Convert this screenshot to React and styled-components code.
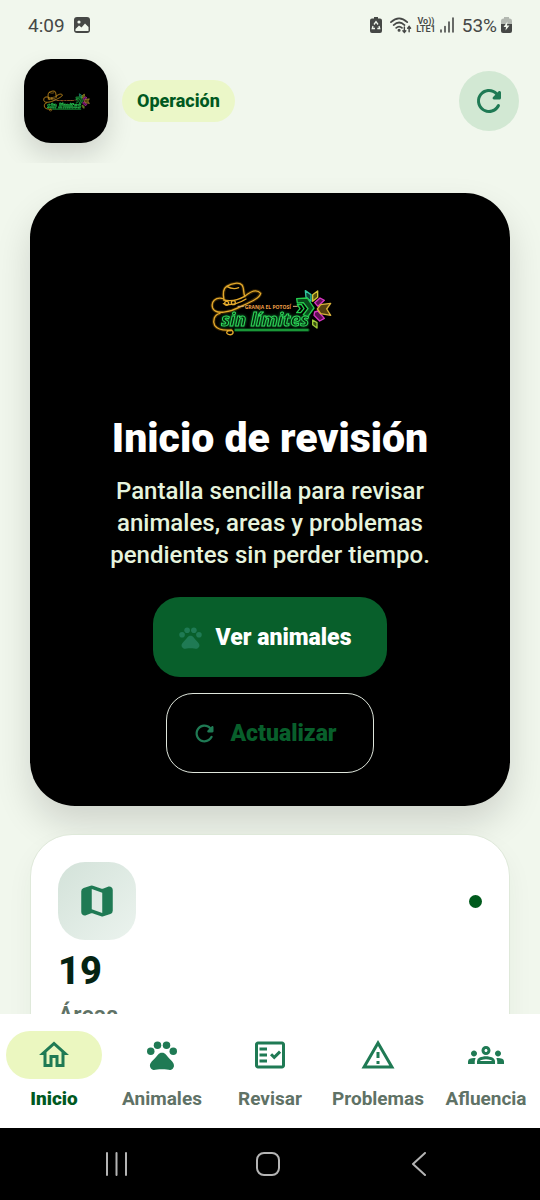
import React from 'react'
import styled, { createGlobalStyle } from 'styled-components'
import {
  MdPets,
  MdOutlineHome,
  MdOutlineFactCheck,
  MdOutlineWarningAmber,
  MdOutlineGroups,
} from 'react-icons/md'

const tabs = [
  { label: 'Inicio', Icon: MdOutlineHome, active: true },
  { label: 'Animales', Icon: MdPets },
  { label: 'Revisar', Icon: MdOutlineFactCheck },
  { label: 'Problemas', Icon: MdOutlineWarningAmber },
  { label: 'Afluencia', Icon: MdOutlineGroups },
]

const RefreshIcon = ({ size }) => (
  <svg width={size} height={size} viewBox="0 0 24 24" fill="currentColor" aria-hidden="true">
    <path d="M17.65 6.35c-1.63-1.63-3.94-2.57-6.48-2.31-3.67.37-6.69 3.35-7.1 7.02C3.52 15.91 7.27 20 12 20c3.19 0 5.93-1.87 7.21-4.56.32-.67-.16-1.44-.9-1.44-.37 0-.72.2-.88.53-1.13 2.43-3.84 3.97-6.8 3.31-2.22-.49-4.01-2.3-4.48-4.52C5.31 9.44 8.26 6 12 6c1.66 0 3.14.69 4.22 1.78l-1.51 1.51c-.63.63-.19 1.71.7 1.71H19c.55 0 1-.45 1-1V6.41c0-.89-1.08-1.34-1.71-.71l-.64.65z" />
  </svg>
)

const MapIcon = () => (
  <svg width="42" height="42" viewBox="0 0 24 24" fill="currentColor" aria-hidden="true">
    <path
      fillRule="evenodd"
      d="M14.65 4.98l-5-1.75a2 2 0 0 0-1.31 0L4.36 4.57A2 2 0 0 0 3 6.46v11.85c0 1.41 1.41 2.37 2.72 1.84l2.93-1.14c.22-.09.47-.09.69-.01l5 1.75c.43.15.89.15 1.31 0l3.98-1.34A2 2 0 0 0 21 17.52V5.67c0-1.41-1.41-2.37-2.72-1.84l-2.93 1.14c-.22.08-.47.09-.7.01zM15 18.89l-6-2.11V5.11l6 2.11v11.67z"
    />
  </svg>
)

const Logo = ({ width }) => (
  <svg width={width} viewBox="0 0 420 240" role="img" aria-label="Granja El Potosí sin límites">
    <g fill="none" strokeLinecap="round" strokeLinejoin="round">
      <g stroke="#5c3d05" strokeWidth="10" opacity="0.6">
        <path d="M72 90C68 70 72 54 80 49C96 39 118 36 126 45C132 52 130 68 134 79" />
        <path d="M70 86C46 80 32 96 38 114C46 136 92 126 122 110C152 96 180 84 182 70C170 56 152 64 134 79" />
        <path d="M60 130C42 134 38 152 44 166C52 178 72 182 94 180" />
      </g>
      <g stroke="#e3a92c" strokeWidth="4">
        <path d="M72 90C68 70 72 54 80 49C92 56 104 58 116 53M80 49C96 39 118 36 126 45C132 52 130 68 134 79" />
        <path d="M70 86C46 80 32 96 38 114C46 136 92 126 122 110C152 96 180 84 182 70C170 56 152 64 134 79" />
        <path d="M72 90C92 95 116 89 134 79M70 101C92 109 120 99 138 87" />
        <path d="M74 100a6 6 0 1 0 12 0a6 6 0 1 0-12 0M94 98a6 6 0 1 0 12 0a6 6 0 1 0-12 0" />
        <path d="M60 130C42 134 38 152 44 166C52 178 72 182 94 180C104 186 98 196 88 194C76 192 78 180 92 182" />
      </g>
      <path stroke="#0c6b26" strokeWidth="10" opacity="0.7" d="M106 180H324" />
      <path stroke="#2ce457" strokeWidth="3" d="M106 180H324" />
      <path stroke="#d8b27e" strokeWidth="3" d="M114 109H130M280 109H292" />
      <g strokeWidth="4">
        <path fill="#0d4437" stroke="#31c5a0" d="M316 62L333 74V94L318 82Z" />
        <path fill="#55500d" stroke="#d6c536" d="M338 74L353 63V82L338 94Z" />
        <path fill="#0a4a1c" stroke="#24cf4e" d="M290 86L322 84L342 114L322 142L310 134L324 116L310 98L292 99Z" />
        <path stroke="#24cf4e" d="M292 104L304 103L312 116L302 128H290L300 116Z" />
        <path fill="#5e0f54" stroke="#d936c4" d="M344 98L360 84L373 91L354 109ZM344 126L354 123L373 145L359 153L342 136Z" />
        <path fill="#54400d" stroke="#d8b13a" d="M362 104L392 100L380 117L392 136L362 131L352 117Z" />
        <path fill="#39500f" stroke="#9fc93a" d="M338 150L351 158V174L338 164Z" />
      </g>
    </g>
    <LogoSmall x="134" y="116">GRANJA EL POTOSÍ</LogoSmall>
    <LogoGlow x="64" y="169">sin límites</LogoGlow>
  </svg>
)

const App = () => {
  return (
    <>
      <GlobalStyle />
      <Screen>
        <StatusBar>
          <StatusGroup>
            <span>4:09</span>
            <svg width="16" height="16" viewBox="0 0 16 16" aria-hidden="true">
              <rect width="16" height="16" rx="3" fill="#464846" />
              <circle cx="5" cy="5" r="1.6" fill="#f1f7ed" />
              <path d="M1.5 12L5 8.5L7.5 10.5L11 6.5L14.5 10V14H1.5Z" fill="#f1f7ed" />
            </svg>
          </StatusGroup>
          <StatusIcons>
            <BatterySaver width="12" height="16" viewBox="0 0 12 16" aria-hidden="true">
              <path d="M4 0H8V1.5H10A2 2 0 0 1 12 3.5V14A2 2 0 0 1 10 16H2A2 2 0 0 1 0 14V3.5A2 2 0 0 1 2 1.5H4Z" fill="#464846" />
              <path d="M4 7.5L6 4.700L8 7.5M9 9L9.7 11.5H7.3M5 11.5H2.300L3 9" fill="none" stroke="#f1f7ed" strokeWidth="1.3" />
            </BatterySaver>
            <svg width="22" height="17" viewBox="0 0 23 17" fill="none" stroke="#464846" strokeWidth="1.8" strokeLinecap="round" aria-hidden="true">
              <path d="M1 5Q9.5 -3 18 5M3.8 8Q9.5 2.7 15.2 8M6.5 11Q9.5 8.2 12.5 11" />
              <circle cx="9.5" cy="13.5" r="0.7" fill="#464846" />
              <path strokeWidth="1.5" d="M15 10V15.5M13.5 14L15 15.8L16.5 14M20 15V9.7M18.5 11.3L20 9.5L21.5 11.3" />
            </svg>
            <Volte>
              <span>Vo))</span>
              <span>LTE1</span>
            </Volte>
            <svg width="14" height="16" viewBox="0 0 14 16" stroke="#464846" strokeWidth="1.6" strokeLinecap="round" aria-hidden="true">
              <path d="M1 13V15M5 9.5V15M9 5V15M13 1V15" />
            </svg>
            <Percent>53%</Percent>
            <svg width="11" height="16" viewBox="0 0 11 16" aria-hidden="true">
              <path d="M3 0H8V1.5A2.5 2.5 0 0 1 11 4V8H0V4A2.5 2.5 0 0 1 3 1.5Z" fill="#b3b8b1" />
              <path d="M0 7H11V14A2 2 0 0 1 9 16H2A2 2 0 0 1 0 14Z" fill="#464846" />
              <path d="M6.5 4.5L2.5 10H5L4.5 13.5L8.5 8.5H6Z" fill="#f1f7ed" />
            </svg>
          </StatusIcons>
        </StatusBar>

        <Header>
          <Brand>
            <Logo width={54} />
          </Brand>
          <Chip>Operación</Chip>
          <RoundButton aria-label="Actualizar">
            <RefreshIcon size={36} />
          </RoundButton>
        </Header>

        <Content>
          <Hero>
            <HeroLogo>
              <Logo width={140} />
            </HeroLogo>
            <Title>Inicio de revisión</Title>
            <Description>
              Pantalla sencilla para revisar animales, areas y problemas pendientes sin perder tiempo.
            </Description>
            <Actions>
              <PrimaryButton>
                <MdPets size={27} />
                <span>Ver animales</span>
              </PrimaryButton>
              <OutlineButton>
                <RefreshIcon size={27} />
                <span>Actualizar</span>
              </OutlineButton>
            </Actions>
          </Hero>
          <StatCard>
            <StatTop>
              <StatIcon>
                <MapIcon />
              </StatIcon>
              <Dot />
            </StatTop>
            <StatValue>19</StatValue>
            <StatLabel>Áreas</StatLabel>
          </StatCard>
        </Content>

        <TabBar>
          {tabs.map(({ label, Icon, active }) => (
            <Tab key={label} href="#" $active={active} aria-current={active ? 'page' : undefined}>
              <TabIcon $active={active}>
                <Icon size={36} />
              </TabIcon>
              {label}
            </Tab>
          ))}
        </TabBar>

        <SystemBar>
          <SystemButton aria-label="Recientes">
            <svg width="24" height="24" viewBox="0 0 24 24">
              <path d="M3 1V23M12.5 1V23M22 1V23" />
            </svg>
          </SystemButton>
          <SystemButton aria-label="Inicio del sistema">
            <svg width="24" height="24" viewBox="0 0 24 24">
              <rect x="1" y="1" width="22" height="22" rx="7" />
            </svg>
          </SystemButton>
          <SystemButton aria-label="Atrás">
            <svg width="24" height="24" viewBox="0 0 24 24">
              <path d="M18 1L6 12L18 23" />
            </svg>
          </SystemButton>
        </SystemBar>
      </Screen>
    </>
  )
}

export default App

const GlobalStyle = createGlobalStyle`
  *{
    box-sizing:border-box;
  }
  body{
    margin:0;
    background:#f1f7ed;
    font-family:Roboto, "Noto Sans", sans-serif;
  }
  svg{
    display:block;
    flex-shrink:0;
  }
  button{
    font-family:inherit;
    border:none;
    padding:0;
    cursor:pointer;
  }
`
const LogoSmall = styled.text`
  font-family:"Open Sans", sans-serif;
  font-size:15px;
  font-weight:bold;
  fill:#f0a048;
`
const LogoGlow = styled.text`
  font-family:"Open Sans", sans-serif;
  font-size:54px;
  font-weight:bold;
  font-style:italic;
  fill:#042a0d;
  stroke:#2fd65a;
  stroke-width:3px;
  filter:drop-shadow(0 0 5px #0f8a34);
`
const Screen = styled.div`
  height:100vh;
  display:flex;
  flex-direction:column;
  overflow:hidden;
`
const StatusBar = styled.div`
  display:flex;
  align-items:center;
  justify-content:space-between;
  height:50px;
  padding:0 28px;
  color:#464846;
  font-size:19px;
  flex-shrink:0;
`
const StatusGroup = styled.div`
  display:flex;
  align-items:center;
  gap:9px;
`
const StatusIcons = styled(StatusGroup)`
  gap:4px;
`
const BatterySaver = styled.svg`
  margin-right:4px;
`
const Volte = styled.span`
  display:flex;
  flex-direction:column;
  align-items:center;
  font-size:9px;
  line-height:8px;
  font-weight:600;
`
const Percent = styled.span`
  margin-left:4px;
`
const Header = styled.header`
  display:flex;
  align-items:center;
  height:113px;
  padding:0 21px 11px 24px;
  overflow:hidden;
  flex-shrink:0;
`
const Brand = styled.div`
  width:84px;
  height:84px;
  display:flex;
  align-items:center;
  justify-content:center;
  border-radius:27px;
  background:#000;
  box-shadow:0 12px 27px rgba(0,0,0,0.14);
`
const Chip = styled.span`
  margin-left:14px;
  padding:0 15px;
  height:42px;
  line-height:42px;
  border-radius:21px;
  background:#ebf7c8;
  color:#00591f;
  font-size:18px;
  font-weight:800;
`
const RoundButton = styled.button`
  width:60px;
  height:60px;
  margin-left:auto;
  display:flex;
  align-items:center;
  justify-content:center;
  border-radius:50%;
  background:#d2e8d3;
  color:#1f7a54;
`
const Content = styled.main`
  flex:1;
  min-height:0;
  overflow:hidden;
  padding:30px 30px 0;
`
const Hero = styled.section`
  display:flex;
  flex-direction:column;
  align-items:center;
  padding:33px;
  border-radius:45px;
  background:#000;
  box-shadow:0 18px 36px rgba(0,0,0,0.14);
`
const HeroLogo = styled.div`
  height:168px;
  display:flex;
  align-items:center;
`
const Title = styled.h1`
  margin:19px 0 12px;
  color:#fff;
  font-size:41px;
  line-height:50px;
  font-weight:900;
  text-align:center;
`
const Description = styled.p`
  max-width:350px;
  margin:0 0 26px;
  color:#e6f3dd;
  font-size:24px;
  line-height:32px;
  font-weight:500;
  text-align:center;
`
const Actions = styled.div`
  display:flex;
  flex-direction:column;
  align-items:center;
  gap:16px;
`
const PrimaryButton = styled.button`
  height:80px;
  display:flex;
  align-items:center;
  gap:12px;
  && {
    padding:0 36px 0 24px;
  }
  border-radius:27px;
  background:#085f2b;
  color:#fff;
  font-size:23px;
  font-weight:900;
  svg{
    color:#1f7a54;
  }
`
const OutlineButton = styled(PrimaryButton)`
  && {
    border:1px solid #dfe6dc;
  }
  background:transparent;
  color:#085f2b;
`
const StatCard = styled.section`
  margin-top:28px;
  padding:27px;
  border:1px solid #dfe9da;
  border-radius:42px;
  background:#fff;
  box-shadow:0 12px 27px rgba(0,60,20,0.05);
`
const StatTop = styled.div`
  display:flex;
  align-items:center;
  justify-content:space-between;
`
const StatIcon = styled.div`
  width:78px;
  height:78px;
  display:flex;
  align-items:center;
  justify-content:center;
  border-radius:27px;
  background:linear-gradient(135deg, #d3e2d9, #ebf3ee);
  color:#1f7a54;
`
const Dot = styled.span`
  width:13px;
  height:13px;
  border-radius:50%;
  background:#005a1c;
`
const StatValue = styled.div`
  margin-top:9px;
  color:#052312;
  font-size:38px;
  line-height:44px;
  font-weight:800;
`
const StatLabel = styled.div`
  margin-top:8px;
  color:#5f7266;
  font-size:23px;
  line-height:30px;
  font-weight:600;
`
const TabBar = styled.nav`
  display:flex;
  height:114px;
  padding-top:17px;
  background:#fff;
  flex-shrink:0;
`
const Tab = styled.a`
  flex:1;
  min-width:0;
  display:flex;
  flex-direction:column;
  align-items:center;
  gap:9px;
  font-size:19px;
  line-height:22px;
  font-weight:${(props) => (props.$active ? 900 : 700)};
  color:${(props) => (props.$active ? '#00591f' : '#5f7266')};
  text-decoration:none;
`
const TabIcon = styled.span`
  width:96px;
  height:48px;
  display:flex;
  align-items:center;
  justify-content:center;
  border-radius:24px;
  background:${(props) => (props.$active ? '#ebf7c0' : 'transparent')};
  color:#1f7a54;
`
const SystemBar = styled.div`
  display:flex;
  align-items:center;
  height:72px;
  padding:0 45px 0 40px;
  background:#000;
  flex-shrink:0;
`
const SystemButton = styled.button`
  flex:1;
  height:72px;
  display:flex;
  align-items:center;
  justify-content:center;
  background:transparent;
  svg{
    fill:none;
    stroke:#b4b4b4;
    stroke-width:2;
    stroke-linecap:round;
    stroke-linejoin:round;
  }
`
